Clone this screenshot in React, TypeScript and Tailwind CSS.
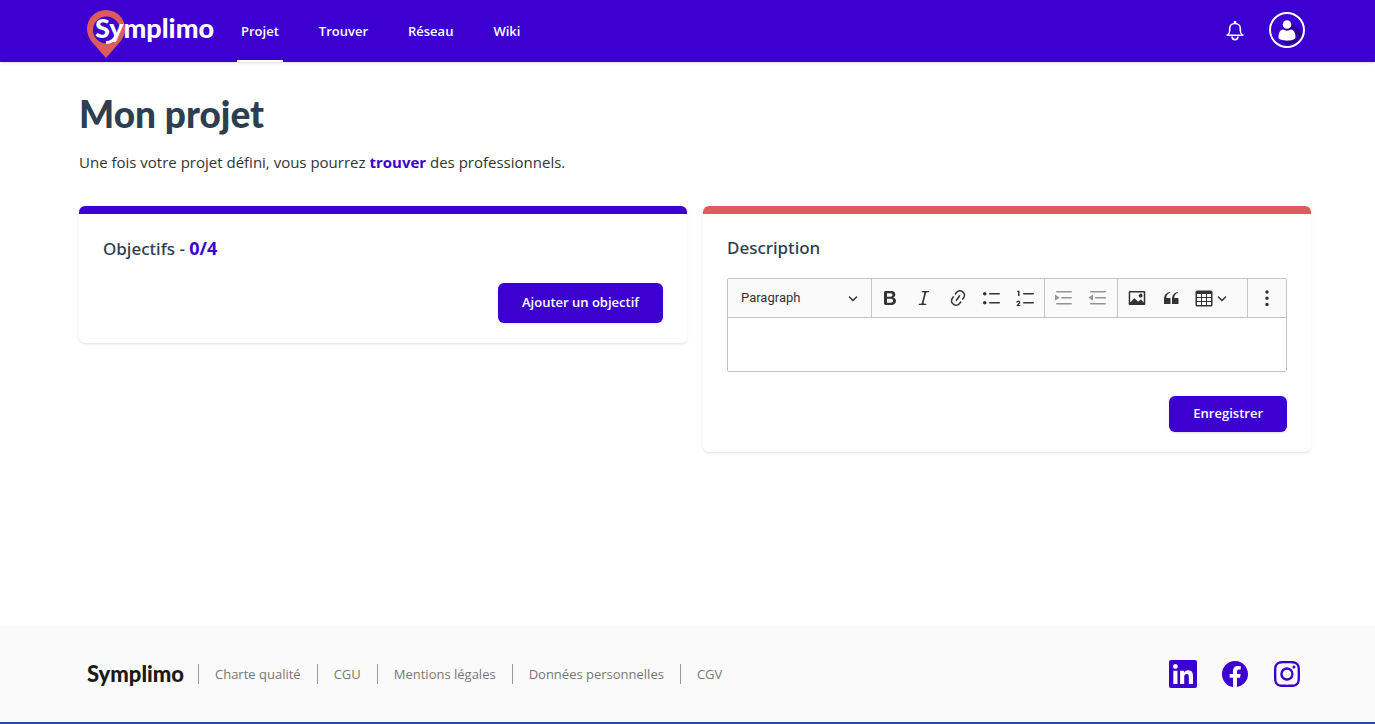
import React, { useState } from 'react';
import { BsFacebook, BsInstagram } from 'react-icons/bs';
import { FaLinkedin } from 'react-icons/fa';

const NAV_ITEMS = ['Projet', 'Trouver', 'Réseau', 'Wiki'];

const FOOTER_LINKS = ['Charte qualité', 'CGU', 'Mentions légales', 'Données personnelles', 'CGV'];

const ICONS = {
  bold: 'M10.187 17H5.773c-.637 0-1.092-.138-1.364-.415-.273-.277-.409-.718-.409-1.323V4.738c0-.617.14-1.062.419-1.332.279-.27.73-.406 1.354-.406h4.68c.69 0 1.288.041 1.793.124.506.083.96.242 1.36.478.341.197.644.447.906.75a3.262 3.262 0 0 1 .808 2.162c0 1.401-.722 2.426-2.167 3.075C15.05 10.175 16 11.315 16 13.01a3.756 3.756 0 0 1-2.296 3.504 6.1 6.1 0 0 1-1.517.377c-.571.073-1.238.11-2 .11zm-.217-6.217H7v4.087h3.069c1.977 0 2.965-.69 2.965-2.072 0-.707-.256-1.22-.768-1.537-.512-.319-1.277-.478-2.296-.478zM7 5.13v3.619h2.606c.729 0 1.292-.067 1.69-.2a1.6 1.6 0 0 0 .91-.765c.165-.267.247-.566.247-.897 0-.707-.26-1.176-.778-1.409-.519-.232-1.31-.348-2.375-.348H7z',
  italic: 'm9.586 14.633.021.004c-.036.335.095.655.393.962.082.083.173.15.274.201h1.474a.6.6 0 1 1 0 1.2H5.304a.6.6 0 0 1 0-1.2h1.15c.474-.07.809-.182 1.005-.334.157-.122.291-.32.404-.597l2.416-9.55a1.053 1.053 0 0 0-.281-.823 1.12 1.12 0 0 0-.442-.296H8.15a.6.6 0 0 1 0-1.2h6.443a.6.6 0 1 1 0 1.2h-1.195c-.376.056-.65.155-.823.296-.215.175-.423.439-.623.79l-2.366 9.347z',
  link: 'm11.077 15 .991-1.416a.75.75 0 1 1 1.229.86l-1.148 1.64a.748.748 0 0 1-.217.206 5.251 5.251 0 0 1-8.503-5.955.741.741 0 0 1 .12-.274l1.147-1.639a.75.75 0 1 1 1.228.86L4.933 10.7l.006.003a3.75 3.75 0 0 0 6.132 4.294l.006.004zm5.494-5.335a.748.748 0 0 1-.12.274l-1.147 1.639a.75.75 0 1 1-1.228-.86l.86-1.23a3.75 3.75 0 0 0-6.144-4.301l-.86 1.229a.75.75 0 0 1-1.229-.86l1.148-1.64a.748.748 0 0 1 .217-.206 5.251 5.251 0 0 1 8.503 5.955zm-4.563-2.532a.75.75 0 0 1 .184 1.045l-3.155 4.505a.75.75 0 1 1-1.229-.86l3.155-4.506a.75.75 0 0 1 1.045-.184z',
  bulleted: 'M7 5.75c0 .414.336.75.75.75h9.5a.75.75 0 1 0 0-1.5h-9.5a.75.75 0 0 0-.75.75zm-6 0C1 4.784 1.777 4 2.75 4c.966 0 1.75.777 1.75 1.75 0 .966-.777 1.75-1.75 1.75C1.784 7.5 1 6.723 1 5.75zm6 9c0 .414.336.75.75.75h9.5a.75.75 0 1 0 0-1.5h-9.5a.75.75 0 0 0-.75.75zm-6 0c0-.966.777-1.75 1.75-1.75.966 0 1.75.777 1.75 1.75 0 .966-.777 1.75-1.75 1.75-.966 0-1.75-.777-1.75-1.75z',
  numbered: 'M7 5.75c0 .414.336.75.75.75h9.5a.75.75 0 1 0 0-1.5h-9.5a.75.75 0 0 0-.75.75zM3.5 3v5H2V3.7H1v-1h2.5V3zM.343 17.857l2.59-3.257H2.92a.6.6 0 1 0-1.04 0H.302a2 2 0 1 1 3.995 0h-.001c-.048.405-.16.734-.333.988-.175.254-.59.692-1.244 1.312H4.3v1h-4l.043-.043zM7 14.75a.75.75 0 0 1 .75-.75h9.5a.75.75 0 1 1 0 1.5h-9.5a.75.75 0 0 1-.75-.75z',
  indent: 'M2 3.75c0 .414.336.75.75.75h14.5a.75.75 0 1 0 0-1.5H2.75a.75.75 0 0 0-.75.75zm5 6c0 .414.336.75.75.75h9.5a.75.75 0 1 0 0-1.5h-9.5a.75.75 0 0 0-.75.75zM2.75 16.5h14.5a.75.75 0 1 0 0-1.5H2.75a.75.75 0 1 0 0 1.5zM1.632 6.95 5.02 9.358a.4.4 0 0 1-.013.661l-3.39 2.207A.4.4 0 0 1 1 11.892V7.275a.4.4 0 0 1 .632-.326z',
  outdent: 'M2 3.75c0 .414.336.75.75.75h14.5a.75.75 0 1 0 0-1.5H2.75a.75.75 0 0 0-.75.75zm5 6c0 .414.336.75.75.75h9.5a.75.75 0 1 0 0-1.5h-9.5a.75.75 0 0 0-.75.75zM2.75 16.5h14.5a.75.75 0 1 0 0-1.5H2.75a.75.75 0 1 0 0 1.5zM4.368 6.95.98 9.358a.4.4 0 0 0 .013.661l3.39 2.207A.4.4 0 0 0 5 11.892V7.275a.4.4 0 0 0-.632-.326z',
  image: 'M6.91 10.54c.26-.23.64-.21.88.03l3.36 3.14 2.23-2.06a.64.64 0 0 1 .87 0l2.52 2.97V4.5H3.2v10.12l3.71-4.08zm10.27-7.51c.6 0 1.09.47 1.09 1.05v11.84c0 .59-.49 1.06-1.09 1.06H2.79c-.6 0-1.09-.47-1.09-1.06V4.08c0-.58.49-1.05 1.1-1.05h14.38zm-5.22 5.56a1.96 1.96 0 1 1 3.4-1.96 1.96 1.96 0 0 1-3.4 1.96z',
  quote: 'M3 10.423a6.5 6.5 0 0 1 6.056-6.408l.038.67C6.448 5.423 5.354 7.663 5.22 10H9c.552 0 .5.432.5.986v4.511c0 .554-.448.503-1 .503h-5c-.552 0-.5-.449-.5-1.003v-4.574zm8 0a6.5 6.5 0 0 1 6.056-6.408l.038.67c-2.646.739-3.74 2.979-3.873 5.315H17c.552 0 .5.432.5.986v4.511c0 .554-.448.503-1 .503h-5c-.552 0-.5-.449-.5-1.003v-4.574z',
  table: 'M3 6v3h4V6H3zm0 4v3h4v-3H3zm0 4v3h4v-3H3zm5 3h4v-3H8v3zm5 0h4v-3h-4v3zm4-4v-3h-4v3h4zm0-4V6h-4v3h4zm1.5 8a1.5 1.5 0 0 1-1.5 1.5H3A1.5 1.5 0 0 1 1.5 17V4c.222-.863 1.068-1.5 2-1.5h13c.932 0 1.778.637 2 1.5v13zM12 13v-3H8v3h4zm0-4V6H8v3h4z',
  more: 'M8.25 4a1.75 1.75 0 1 1 3.5 0 1.75 1.75 0 0 1-3.5 0zm0 6.25a1.75 1.75 0 1 1 3.5 0 1.75 1.75 0 0 1-3.5 0zm0 6.25a1.75 1.75 0 1 1 3.5 0 1.75 1.75 0 0 1-3.5 0z',
};

interface ToolProps {
  icon: keyof typeof ICONS;
  label: string;
  disabled?: boolean;
}

const Tool: React.FC<ToolProps> = ({ icon, label, disabled }) => (
  <button
    type="button"
    aria-label={label}
    disabled={disabled}
    className="flex h-[38px] w-[34px] items-center justify-center text-[#333] disabled:opacity-50"
  >
    <svg viewBox="0 0 20 20" className="size-5" fill="currentColor">
      <path d={ICONS[icon]} />
    </svg>
  </button>
);

const Caret: React.FC = () => (
  <svg viewBox="0 0 10 10" className="size-[10px] shrink-0" fill="#333">
    <path d="M.941 4.523a.75.75 0 1 1 1.060-1.060l3.006 3.005 3.005-3.005a.75.75 0 1 1 1.060 1.060l-3.549 3.550a.75.75 0 0 1-1.168-.136L.941 4.523z" />
  </svg>
);

const Logo: React.FC = () => (
  <a href="#" className="relative mt-1.5 block h-12 w-[126px]">
    <svg viewBox="0 0 38 48" className="h-12 w-[38px]">
      <path fill="#dd5b5b" d="M19 0C8.500 0 0 8.500 0 19c0 5 2 9 5 13l14 16 14-16c3-4 5-8 5-13C38 8.500 29.500 0 19 0z" />
      <circle cx="19.500" cy="20" r="13.500" fill="#3b00d0" />
      <path fill="none" stroke="#fff" strokeWidth="3" d="M19 32.500c5 0 8-2 10-7" />
    </svg>
    <span className="absolute top-0.5 left-2 font-[Lato] text-[27px] leading-8 font-black text-white">Symplimo</span>
  </a>
);

const Header: React.FC = () => (
  <header className="bg-[#3b00d0] shadow-sm">
    <div className="flex h-[62px] items-center pr-[70px] pl-[87px]">
      <Logo />
      <nav className="ml-6 flex gap-8 self-stretch">
        {NAV_ITEMS.map((item, i) => (
          <a
            key={item}
            href="#"
            className={`flex items-center border-b-2 px-1 pt-1 text-[13px] font-semibold text-white ${i === 0 ? 'border-white' : 'border-transparent'}`}
          >
            {item}
          </a>
        ))}
      </nav>
      <div className="mb-0.5 ml-auto flex items-center gap-6">
        <button type="button" aria-label="Notifications" className="pt-0.5 text-white">
          <svg viewBox="0 0 20 20" className="size-5" fill="none" stroke="currentColor" strokeWidth="1.600">
            <path strokeWidth="2.500" d="M10 0v2.500" />
            <path d="M1.500 14.200h17M2.500 14C4.500 12.500 4.700 12 4.700 9V7.500C4.700 4.500 7 2.500 10 2.500s5.300 2 5.300 5V9c0 3 .2 3.500 2.200 5" />
            <path d="M7 15.500c.2 4.200 5.800 4.200 6 0" />
          </svg>
        </button>
        <button type="button" aria-label="Mon compte">
          <svg viewBox="0 0 36 36" className="size-9">
            <path fill="#2b0394" d="M21 9l12 12c-1 6-7 12-15 12l-7-6z" />
            <circle cx="18" cy="18" r="17" fill="none" stroke="#fff" strokeWidth="2" />
            <circle cx="18" cy="12.500" r="4.300" fill="#fff" />
            <path fill="#fff" d="M14 17.500c2.500 1.500 5.500 1.500 8 0 3 .5 4.500 3 4.500 8.500-2 3.500-15 3.500-17 0 0-5.500 1.500-8 4.500-8.500z" />
          </svg>
        </button>
      </div>
    </div>
  </header>
);

const Editor: React.FC = () => {
  const [text, setText] = useState('');

  return (
    <div className="rounded-xs border border-[#c4c4c4]">
      <div className="flex h-[39px] border-b border-[#c4c4c4] bg-[#fafafa]">
        <label className="relative flex w-[143px] items-center">
          <select
            aria-label="Style"
            className="h-full w-full appearance-none bg-transparent pl-[13px] font-[Roboto] text-[13px] text-[#333]"
          >
            <option>Paragraph</option>
          </select>
          <span className="pointer-events-none absolute right-[13px]">
            <Caret />
          </span>
        </label>
        <div className="flex border-l border-[#c4c4c4] px-px">
          <Tool icon="bold" label="Gras" />
          <Tool icon="italic" label="Italique" />
          <Tool icon="link" label="Lien" />
          <Tool icon="bulleted" label="Liste à puces" />
          <Tool icon="numbered" label="Liste numérotée" />
        </div>
        <div className="flex border-l border-[#c4c4c4] px-0.5">
          <Tool icon="indent" label="Augmenter le retrait" disabled />
          <Tool icon="outdent" label="Diminuer le retrait" disabled />
        </div>
        <div className="flex flex-1 border-l border-[#c4c4c4] px-0.5">
          <Tool icon="image" label="Image" />
          <Tool icon="quote" label="Citation" />
          <button type="button" aria-label="Tableau" className="flex items-center gap-[3px] pl-[6px]">
            <svg viewBox="0 0 20 20" className="size-5" fill="#333">
              <path d={ICONS.table} />
            </svg>
            <Caret />
          </button>
        </div>
        <div className="flex border-l border-[#c4c4c4] px-0.5">
          <Tool icon="more" label="Plus d'options" />
        </div>
      </div>
      <textarea
        aria-label="Description"
        value={text}
        onChange={e => setText(e.target.value)}
        className="block h-[53px] w-full resize-none bg-white px-3 py-4 text-sm outline-none"
      />
    </div>
  );
};

const App: React.FC = () => {
  return (
    <div className="flex min-h-screen flex-col bg-white font-['Open_Sans',sans-serif] text-[#2c3e50]">
      <Header />

      <main className="flex-1 pt-[30px] pr-16 pl-[79px]">
        <h1 className="font-[Lato] text-[37px] leading-[44px] font-black">Mon projet</h1>
        <p className="mt-[14px] text-[15px] leading-6 text-[#333]">
          Une fois votre projet défini, vous pourrez{' '}
          <a href="#" className="font-bold text-[#3b00d0]">trouver</a> des professionnels.
        </p>

        <div className="mt-8 grid grid-cols-2 items-start gap-4">
          <section className="rounded-md border-t-8 border-[#3b00d0] px-6 pt-5 pb-5 shadow-sm">
            <h2 className="font-['Noto_Sans'] text-[17px] leading-7 font-medium">
              Objectifs - <span className="text-lg leading-7 font-bold text-[#3b00d0]">0/4</span>
            </h2>
            <div className="mt-5 flex justify-end">
              <button type="button" className="h-10 rounded-md bg-[#3b00d0] px-6 text-[13px] font-semibold text-white shadow-sm">
                Ajouter un objectif
              </button>
            </div>
          </section>

          <section className="rounded-md border-t-8 border-[#dd5b5b] px-6 pt-5 pb-5 shadow-sm">
            <h2 className="mb-4 font-['Noto_Sans'] text-[17px] leading-7 font-medium">Description</h2>
            <Editor />
            <div className="mt-6 flex justify-end">
              <button type="button" className="h-9 rounded-md bg-[#3b00d0] px-6 text-[13px] font-semibold text-white shadow-sm">
                Enregistrer
              </button>
            </div>
          </section>
        </div>
      </main>

      <footer className="border-b-2 border-[#1f5399] bg-[#fafafa]">
        <div className="flex h-24 items-center pr-[74px] pl-[87px]">
          <span className="mr-[14px] font-[Lato] text-[22px] leading-7 font-black text-[#1a1a1a]">Symplimo</span>
          <ul className="flex">
            {FOOTER_LINKS.map(link => (
              <li key={link} className="flex items-center border-l border-[#999] px-4 text-[13px] leading-5 text-[#777]">
                <a href="#">{link}</a>
              </li>
            ))}
          </ul>
          <div className="ml-auto flex items-center gap-6 text-[#3b00d0]">
            <a href="#" aria-label="LinkedIn"><FaLinkedin className="h-8 w-7" /></a>
            <a href="#" aria-label="Facebook"><BsFacebook size={28} className="p-px" /></a>
            <a href="#" aria-label="Instagram"><BsInstagram size={28} className="p-px" /></a>
          </div>
        </div>
      </footer>
    </div>
  );
};

export default App;
